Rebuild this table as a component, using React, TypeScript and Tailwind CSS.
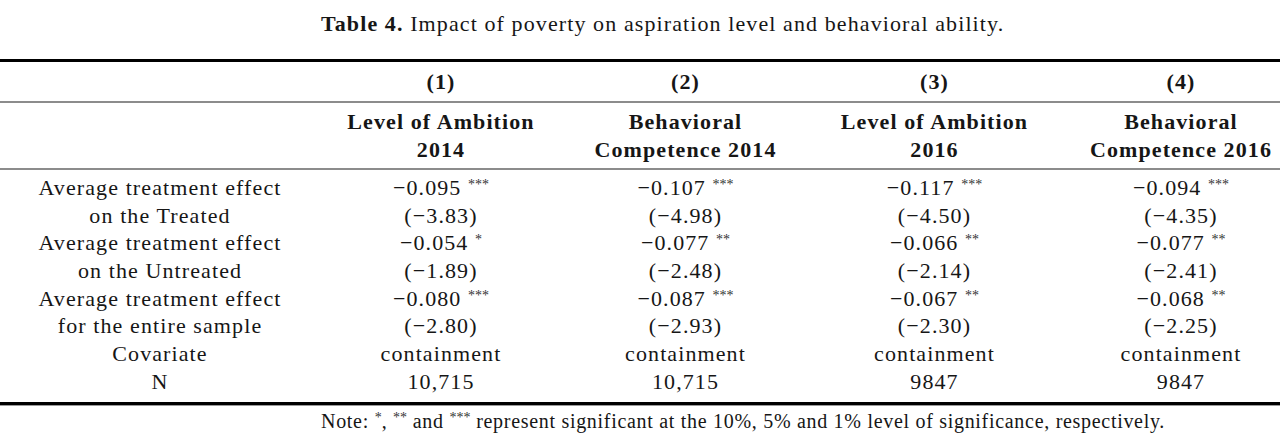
const rows: { label: string; cells: { v: string; s?: string }[] }[] = [
  { label: "Average treatment effect", cells: [{ v: "−0.095", s: "***" }, { v: "−0.107", s: "***" }, { v: "−0.117", s: "***" }, { v: "−0.094", s: "***" }] },
  { label: "on the Treated", cells: [{ v: "(−3.83)" }, { v: "(−4.98)" }, { v: "(−4.50)" }, { v: "(−4.35)" }] },
  { label: "Average treatment effect", cells: [{ v: "−0.054", s: "*" }, { v: "−0.077", s: "**" }, { v: "−0.066", s: "**" }, { v: "−0.077", s: "**" }] },
  { label: "on the Untreated", cells: [{ v: "(−1.89)" }, { v: "(−2.48)" }, { v: "(−2.14)" }, { v: "(−2.41)" }] },
  { label: "Average treatment effect", cells: [{ v: "−0.080", s: "***" }, { v: "−0.087", s: "***" }, { v: "−0.067", s: "**" }, { v: "−0.068", s: "**" }] },
  { label: "for the entire sample", cells: [{ v: "(−2.80)" }, { v: "(−2.93)" }, { v: "(−2.30)" }, { v: "(−2.25)" }] },
  { label: "Covariate", cells: [{ v: "containment" }, { v: "containment" }, { v: "containment" }, { v: "containment" }] },
  { label: "N", cells: [{ v: "10,715" }, { v: "10,715" }, { v: "9847" }, { v: "9847" }] },
];

const headers = [
  ["Level of Ambition", "2014"],
  ["Behavioral", "Competence 2014"],
  ["Level of Ambition", "2016"],
  ["Behavioral", "Competence 2016"],
];

const grid = "grid grid-cols-[320px_242px_247px_251px_242px] text-center";

function Stars({ s }: { s: string }) {
  return <span className="relative -top-[6px] text-[14px] leading-[0] tracking-normal text-[#333]">{s}</span>;
}

export default function App() {
  return (
    <div
      className="w-[1280px] h-[436px] overflow-hidden bg-white text-[#161616] text-[22px] tracking-[0.05em] leading-[27.7px]"
      style={{ fontFamily: '"Liberation Serif", "Times New Roman", serif' }}
    >
      <div className="pl-[321px] pt-[10px] h-[59px]">
        <span className="font-bold">Table 4.</span> Impact of poverty on aspiration level and behavioral ability.
      </div>

      <div className="w-[1302px]">
        <div className="h-[3px] bg-black" />
        <div className={`${grid} h-[39px] items-center font-bold`}>
          <div />
          <div>(1)</div>
          <div>(2)</div>
          <div>(3)</div>
          <div>(4)</div>
        </div>
        <div className="h-[2px] bg-[#8c8c8c]" />
        <div className={`${grid} h-[65px] items-center font-bold`}>
          <div />
          {headers.map((h, i) => (
            <div key={i}>
              <div>{h[0]}</div>
              <div>{h[1]}</div>
            </div>
          ))}
        </div>
        <div className="h-[2px] bg-[#8c8c8c]" />
        <div className="pt-[4px] pb-[6px]">
          {rows.map((r, i) => (
            <div key={i} className={`${grid} h-[27.7px]`}>
              <div>{r.label}</div>
              {r.cells.map((c, j) => (
                <div key={j}>
                  {c.v}
                  {c.s && (
                    <>
                      {" "}
                      <Stars s={c.s} />
                    </>
                  )}
                </div>
              ))}
            </div>
          ))}
        </div>
        <div className="h-[3px] bg-black" />
        <div className="h-[1px] bg-[#9a9a9a]" />
      </div>

      <div className="pl-[321px] pt-[2px] text-[20px] tracking-[0.035em]">
        Note: <Stars s="*" />, <Stars s="**" /> and <Stars s="***" /> represent significant at the 10%, 5% and 1% level of
        significance, respectively.
      </div>
    </div>
  );
}
